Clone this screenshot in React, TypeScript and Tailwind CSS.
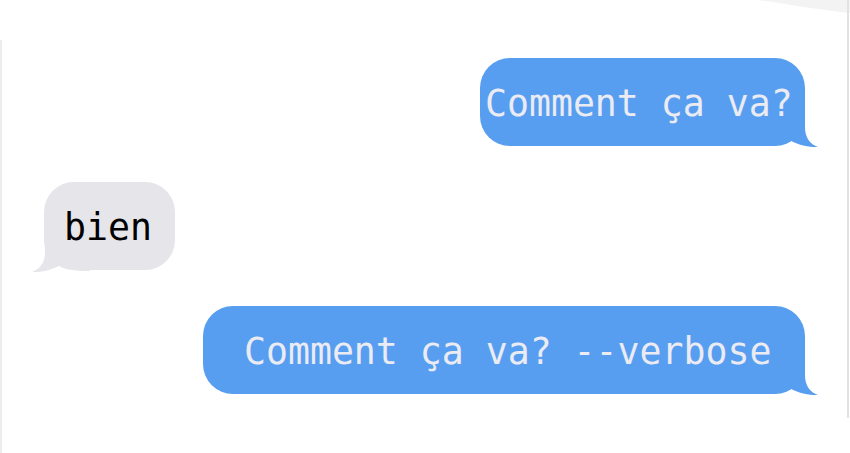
import type { ReactNode } from 'react'

const mono = { fontFamily: '"DejaVu Sans Mono", "Liberation Mono", monospace' }

// iMessage style tail, drawn for the right-hand corner and mirrored for the left
function Tail({ color, side }: { color: string; side: 'left' | 'right' }) {
  const place =
    side === 'right'
      ? 'absolute right-[-15px] bottom-[-3px]'
      : 'absolute left-[-14px] bottom-[-4px] -scale-x-100'
  return (
    <svg width="60" height="40" viewBox="0 0 60 40" className={place} aria-hidden>
      <path
        d="M0 0 L45 0 L45 18 C45 29 50 35 58 38 C49 38.5 33 35 27 29 C22 34 16 37 8 37 L0 37 Z"
        fill={color}
      />
    </svg>
  )
}

function Bubble({
  children,
  side,
  className,
}: {
  children: ReactNode
  side: 'left' | 'right'
  className: string
}) {
  const sent = side === 'right'
  return (
    <div
      className={`relative flex h-[88px] items-center rounded-[30px] ${
        sent ? 'self-end bg-[#589ef0] text-[#ebebf3]' : 'self-start bg-[#e5e5ea] text-black'
      } ${className}`}
    >
      <Tail color={sent ? '#589ef0' : '#e5e5ea'} side={side} />
      <span className="relative translate-y-[2px] whitespace-pre text-[36.5px] leading-none" style={mono}>
        {children}
      </span>
    </div>
  )
}

export default function App() {
  return (
    <div className="relative h-[453px] w-[850px] overflow-hidden bg-white">
      {/* edges of the page behind the thread */}
      <svg width="92" height="14" viewBox="0 0 92 14" className="absolute top-0 right-0" aria-hidden>
        <path d="M0 0 C30 4 60 10 92 13 L92 0 Z" fill="#f3f3f3" />
      </svg>
      <div className="absolute top-0 right-[1px] h-[418px] w-[2px] bg-[#e2e2e2]" />
      <div className="absolute top-[40px] left-0 h-[413px] w-[2px] bg-[#ececec]" />

      <div className="flex flex-col gap-[36px] pt-[58px] pr-[45px] pl-[44px]">
        <Bubble side="right" className="w-[325px] pl-[5px]">
          Comment ça va?
        </Bubble>
        <Bubble side="left" className="w-[131px] pl-[20px]">
          bien
        </Bubble>
        <Bubble side="right" className="w-[602px] pl-[41px]">
          Comment ça va? --verbose
        </Bubble>
      </div>
    </div>
  )
}
